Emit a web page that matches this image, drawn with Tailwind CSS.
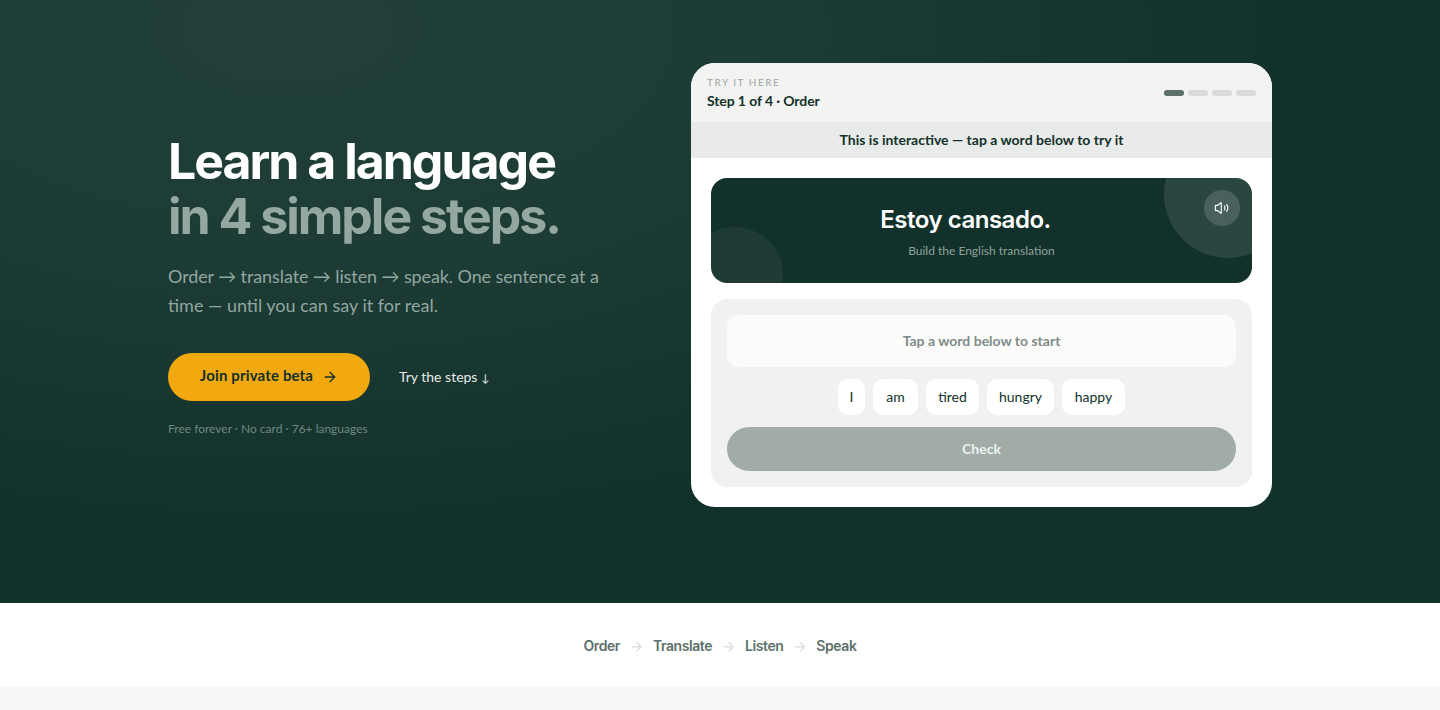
<!DOCTYPE html>
<html lang="en">
<head>
<meta charset="UTF-8">
<meta name="viewport" content="width=device-width, initial-scale=1.0">
<title>Learn a language in 4 simple steps</title>
<script src="https://cdn.jsdelivr.net/npm/@tailwindcss/browser@4"></script>
</head>
<body class="bg-[#f7f7f5] font-['Lato','DejaVu_Sans',sans-serif] text-[#12312b] h-[710px] overflow-hidden">
  <!-- Hero -->
  <section class="h-[603px] bg-[#12312b] bg-[radial-gradient(ellipse_at_20%_5%,#223f39_0%,#1c3c35_28%,#12312b_62%)] pt-[63px]">
    <div class="mx-auto w-[1104px] flex justify-between items-center">
      <div class="w-[450px] pt-px">
        <h1 class="font-['Inter',sans-serif] font-bold text-[50px] leading-[55px] tracking-[-0.04em] text-white">
          Learn a language<br><span class="text-[#95a7a1]">in 4 simple steps.</span>
        </h1>
        <p class="mt-[18px] text-[18px] leading-[29px] text-[#93a6a0]"><span class="tracking-[-0.1px]">Order → translate → listen → speak. One sentence at a</span> time — until you can say it for real.</p>
        <div class="mt-[33px] flex items-center gap-[29px]">
          <a class="w-[202px] h-12 pb-[3px] rounded-full bg-[#f2a80f] flex items-center justify-center gap-[9px] text-[15px] tracking-[0.01em] font-bold text-[#12312b]">
            Join private beta
            <svg class="w-4 h-4 mt-[3px]" viewBox="0 0 24 24" fill="none" stroke="currentColor" stroke-width="2" stroke-linecap="round" stroke-linejoin="round"><path d="M5 12h14"/><path d="m12 5 7 7-7 7"/></svg>
          </a>
          <a class="pb-[2px] text-[14px] text-[#e7ebe9]">Try the steps <span class="text-[11px]">↓</span></a>
        </div>
        <p class="mt-5 text-[12px] leading-4 text-[#6f8880]">Free forever · No card · 76+ languages</p>
      </div>

      <!-- Try-it card -->
      <div class="w-[581px] h-[444px] rounded-3xl bg-white overflow-hidden">
        <div class="h-[59px] bg-[#f3f3f2] px-4 flex justify-between">
          <div class="pt-[14px]">
            <p class="text-[10px] leading-[11px] tracking-[0.15em] text-[#9aa5a1]">TRY IT HERE</p>
            <p class="mt-[3px] font-bold text-[14px] leading-[20px] tracking-[-0.1px]">Step 1 of 4 · Order</p>
          </div>
          <div class="flex gap-1 mt-[27px]">
            <span class="w-5 h-1.5 rounded-full bg-[#5c716b]"></span>
            <span class="w-5 h-1.5 rounded-full bg-[#d8dbd9]"></span>
            <span class="w-5 h-1.5 rounded-full bg-[#d8dbd9]"></span>
            <span class="w-5 h-1.5 rounded-full bg-[#d8dbd9]"></span>
          </div>
        </div>
        <div class="h-9 pb-[2px] bg-[#e9ebea] flex items-center justify-center text-[14px] font-bold">This is interactive — tap a word below to try it</div>
        <div class="p-5 flex flex-col gap-4">
          <div class="relative h-[105px] rounded-2xl bg-[#12312b] overflow-hidden flex flex-col items-center">
            <span class="absolute -top-12 -right-10 w-32 h-32 rounded-full bg-white/10"></span>
            <span class="absolute -bottom-10 -left-6 w-24 h-24 rounded-full bg-white/5"></span>
            <button class="absolute top-3 right-3 w-9 h-9 rounded-full bg-white/15 flex items-center justify-center text-white">
              <svg class="w-4 h-4" viewBox="0 0 24 24" fill="none" stroke="currentColor" stroke-width="1.75" stroke-linecap="round" stroke-linejoin="round"><path d="M11 4.7a.7.7 0 0 0-1.2-.5L6.4 7.6A1.4 1.4 0 0 1 5.4 8H3a1 1 0 0 0-1 1v6a1 1 0 0 0 1 1h2.4a1.4 1.4 0 0 1 1 .4l3.4 3.4a.7.7 0 0 0 1.2-.5z"/><path d="M15.5 9a5 5 0 0 1 0 6"/><path d="M19 7a9 9 0 0 1 0 10"/></svg>
            </button>
            <h2 class="mt-[26px] mr-8 font-['Inter',sans-serif] font-semibold text-[24px] leading-[32px] tracking-[-0.02em] text-white">Estoy cansado.</h2>
            <p class="mt-[7px] text-[12px] leading-4 text-[#8fa39c]">Build the English translation</p>
          </div>
          <div class="rounded-2xl bg-[#f1f2f0] p-4 flex flex-col gap-3">
            <div class="h-[52px] pb-[2px] rounded-xl bg-[#fbfbf9] flex items-center justify-center text-[14px] font-bold text-[#7f8c88]">Tap a word below to start</div>
            <div class="flex justify-center gap-2">
              <button class="h-9 w-[27px] pb-[2px] rounded-[10px] bg-white text-[14px]">I</button>
              <button class="h-9 w-[45px] pb-[2px] rounded-[10px] bg-white text-[14px]">am</button>
              <button class="h-9 w-[53px] pb-[2px] rounded-[10px] bg-white text-[14px]">tired</button>
              <button class="h-9 w-[67px] pb-[2px] rounded-[10px] bg-white text-[14px]">hungry</button>
              <button class="h-9 w-[63px] pb-[2px] rounded-[10px] bg-white text-[14px]">happy</button>
            </div>
            <button class="h-11 pb-[2px] rounded-full bg-[#a1aca7] text-[14px] font-bold text-[#eef1ef]">Check</button>
          </div>
        </div>
      </div>
    </div>
  </section>

  <!-- Steps strip -->
  <section class="h-[84px] bg-white flex items-center justify-center font-['Inter',sans-serif] font-semibold text-[14px] tracking-[-0.03em] text-[#5c716b]">
    <span>Order</span><span class="mx-[10px] text-[#dde1de]">→</span>
    <span>Translate</span><span class="mx-[10px] text-[#dde1de]">→</span>
    <span>Listen</span><span class="mx-[10px] text-[#dde1de]">→</span>
    <span>Speak</span>
  </section>
</body>
</html>
